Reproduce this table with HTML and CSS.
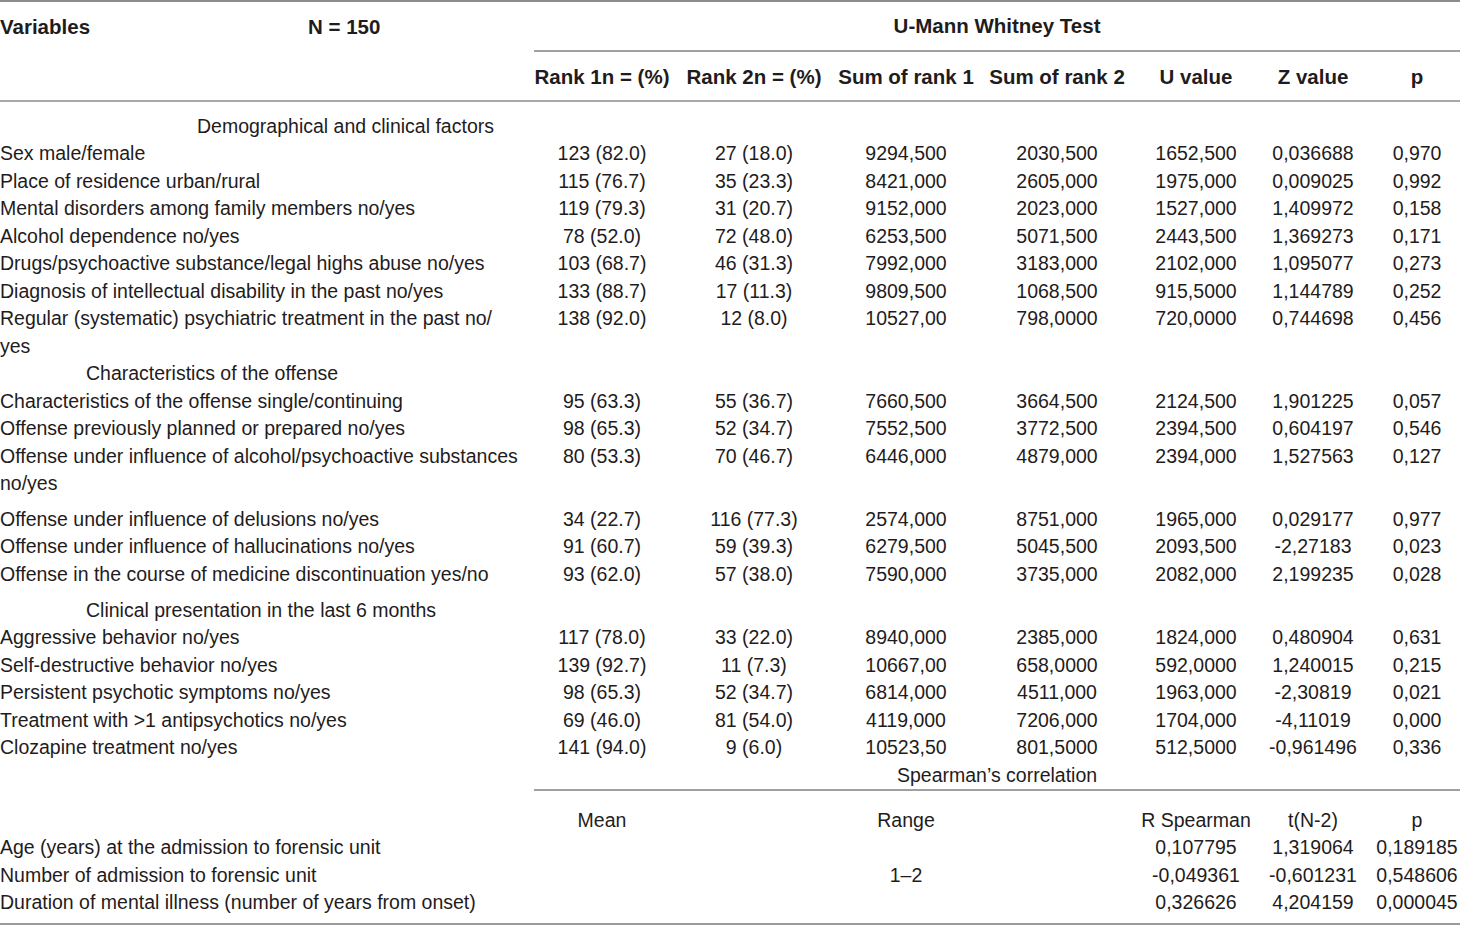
FILE: index.html
```html
<!DOCTYPE html>
<html>
 <head>
  <title>U-Mann Whitney Test and Spearman's correlation</title>
  <link rel="stylesheet" href="styles.css">
 </head>
 <body>
  <table class="stats">
   <colgroup>
    <col class="c0"><col class="c1"><col class="c2"><col class="c3"><col class="c4"><col class="c5"><col class="c6"><col class="c7">
   </colgroup>
   <thead>
    <tr class="head1">
     <th class="var">Variables<span class="n">N = 150</span></th>
     <th colspan="7" class="group">U-Mann Whitney Test</th>
    </tr>
    <tr class="head2">
     <th></th>
     <th>Rank 1n = (%)</th>
     <th>Rank 2n = (%)</th>
     <th>Sum of rank 1</th>
     <th>Sum of rank 2</th>
     <th>U value</th>
     <th>Z value</th>
     <th>p</th>
    </tr>
   </thead>
   <tbody>
    <tr class="section first">
     <td class="ind1">Demographical and clinical factors</td><td colspan="7"></td>
    </tr>
    <tr><td>Sex male/female</td><td>123 (82.0)</td><td>27 (18.0)</td><td>9294,500</td><td>2030,500</td><td>1652,500</td><td>0,036688</td><td>0,970</td></tr>
    <tr><td>Place of residence urban/rural</td><td>115 (76.7)</td><td>35 (23.3)</td><td>8421,000</td><td>2605,000</td><td>1975,000</td><td>0,009025</td><td>0,992</td></tr>
    <tr><td>Mental disorders among family members no/yes</td><td>119 (79.3)</td><td>31 (20.7)</td><td>9152,000</td><td>2023,000</td><td>1527,000</td><td>1,409972</td><td>0,158</td></tr>
    <tr><td>Alcohol dependence no/yes</td><td>78 (52.0)</td><td>72 (48.0)</td><td>6253,500</td><td>5071,500</td><td>2443,500</td><td>1,369273</td><td>0,171</td></tr>
    <tr><td>Drugs/psychoactive substance/legal highs abuse no/yes</td><td>103 (68.7)</td><td>46 (31.3)</td><td>7992,000</td><td>3183,000</td><td>2102,000</td><td>1,095077</td><td>0,273</td></tr>
    <tr><td>Diagnosis of intellectual disability in the past no/yes</td><td>133 (88.7)</td><td>17 (11.3)</td><td>9809,500</td><td>1068,500</td><td>915,5000</td><td>1,144789</td><td>0,252</td></tr>
    <tr><td>Regular (systematic) psychiatric treatment in the past no/<br>yes</td><td>138 (92.0)</td><td>12 (8.0)</td><td>10527,00</td><td>798,0000</td><td>720,0000</td><td>0,744698</td><td>0,456</td></tr>
    <tr class="section">
     <td class="ind2">Characteristics of the offense</td><td colspan="7"></td>
    </tr>
    <tr><td>Characteristics of the offense single/continuing</td><td>95 (63.3)</td><td>55 (36.7)</td><td>7660,500</td><td>3664,500</td><td>2124,500</td><td>1,901225</td><td>0,057</td></tr>
    <tr><td>Offense previously planned or prepared no/yes</td><td>98 (65.3)</td><td>52 (34.7)</td><td>7552,500</td><td>3772,500</td><td>2394,500</td><td>0,604197</td><td>0,546</td></tr>
    <tr><td>Offense under influence of alcohol/psychoactive substances<br>no/yes</td><td>80 (53.3)</td><td>70 (46.7)</td><td>6446,000</td><td>4879,000</td><td>2394,000</td><td>1,527563</td><td>0,127</td></tr>
    <tr class="spaced"><td>Offense under influence of delusions no/yes</td><td>34 (22.7)</td><td>116 (77.3)</td><td>2574,000</td><td>8751,000</td><td>1965,000</td><td>0,029177</td><td>0,977</td></tr>
    <tr><td>Offense under influence of hallucinations no/yes</td><td>91 (60.7)</td><td>59 (39.3)</td><td>6279,500</td><td>5045,500</td><td>2093,500</td><td>-2,27183</td><td>0,023</td></tr>
    <tr><td>Offense in the course of medicine discontinuation yes/no</td><td>93 (62.0)</td><td>57 (38.0)</td><td>7590,000</td><td>3735,000</td><td>2082,000</td><td>2,199235</td><td>0,028</td></tr>
    <tr class="section spaced">
     <td class="ind2">Clinical presentation in the last 6 months</td><td colspan="7"></td>
    </tr>
    <tr><td>Aggressive behavior no/yes</td><td>117 (78.0)</td><td>33 (22.0)</td><td>8940,000</td><td>2385,000</td><td>1824,000</td><td>0,480904</td><td>0,631</td></tr>
    <tr><td>Self-destructive behavior no/yes</td><td>139 (92.7)</td><td>11 (7.3)</td><td>10667,00</td><td>658,0000</td><td>592,0000</td><td>1,240015</td><td>0,215</td></tr>
    <tr><td>Persistent psychotic symptoms no/yes</td><td>98 (65.3)</td><td>52 (34.7)</td><td>6814,000</td><td>4511,000</td><td>1963,000</td><td>-2,30819</td><td>0,021</td></tr>
    <tr><td>Treatment with &gt;1 antipsychotics no/yes</td><td>69 (46.0)</td><td>81 (54.0)</td><td>4119,000</td><td>7206,000</td><td>1704,000</td><td>-4,11019</td><td>0,000</td></tr>
    <tr><td>Clozapine treatment no/yes</td><td>141 (94.0)</td><td>9 (6.0)</td><td>10523,50</td><td>801,5000</td><td>512,5000</td><td>-0,961496</td><td>0,336</td></tr>
    <tr class="corr">
     <td></td><td colspan="7" class="group">Spearman’s correlation</td>
    </tr>
    <tr class="corrhead">
     <td></td><td>Mean</td><td></td><td>Range</td><td></td><td>R Spearman</td><td>t(N-2)</td><td>p</td>
    </tr>
    <tr><td>Age (years) at the admission to forensic unit</td><td></td><td></td><td></td><td></td><td>0,107795</td><td>1,319064</td><td>0,189185</td></tr>
    <tr><td>Number of admission to forensic unit</td><td></td><td></td><td>1–2</td><td></td><td>-0,049361</td><td>-0,601231</td><td>0,548606</td></tr>
    <tr class="end"><td>Duration of mental illness (number of years from onset)</td><td></td><td></td><td></td><td></td><td>0,326626</td><td>4,204159</td><td>0,000045</td></tr>
   </tbody>
  </table>
 </body>
</html>
```

FILE: styles.css
```css
    html, body {
	margin: 0px;
	background-color: #ffffff;
    }

    table.stats {
	width: 1460px;
	table-layout: fixed;
	border-collapse: collapse;
	font-family: "Liberation Sans", Arial, sans-serif;
	font-size: 19.5px;
	color: #1f1c1d;
	border-top: 2px solid #8c8c8c;
	border-bottom: 2px solid #9a9a9a;
    }

    col.c0 { width: 534px; }
    col.c1 { width: 136px; }
    col.c2 { width: 168px; }
    col.c3 { width: 136px; }
    col.c4 { width: 166px; }
    col.c5 { width: 112px; }
    col.c6 { width: 122px; }
    col.c7 { width: 86px; }

    th, td {
	padding: 0px;
	white-space: nowrap;
	text-align: center;
	line-height: 27.5px;
	vertical-align: top;
    }

    th {
	font-weight: bold;
	font-size: 20.5px;
	vertical-align: middle;
    }

    td:first-child, th.var {
	text-align: left;
    }

    td:first-child {
	white-space: normal;
    }

    tr.head1 th {
	height: 48px;
    }

    th.var span.n {
	margin-left: 218px;
    }

    th.group {
	border-bottom: 2px solid #a0a0a0;
    }

    tr.head2 th {
	height: 46px;
	border-bottom: 2px solid #a8a8a8;
	padding-top: 2px;
    }

    tr.section td {
	white-space: nowrap;
	vertical-align: bottom;
    }

    tr.section td.ind1 {
	padding-left: 197px;
    }

    tr.section td.ind2 {
	padding-left: 86px;
    }

    tr.first td {
	height: 38px;
    }

    tr.spaced td {
	padding-top: 8px;
    }

    tr.section.spaced td {
	padding-top: 0px;
	height: 36px;
    }

    tr.corr td.group {
	border-bottom: 2px solid #a0a0a0;
    }

    tr.corrhead td {
	height: 43px;
	vertical-align: bottom;
    }

    tr.end td {
	padding-bottom: 6px;
    }
```
